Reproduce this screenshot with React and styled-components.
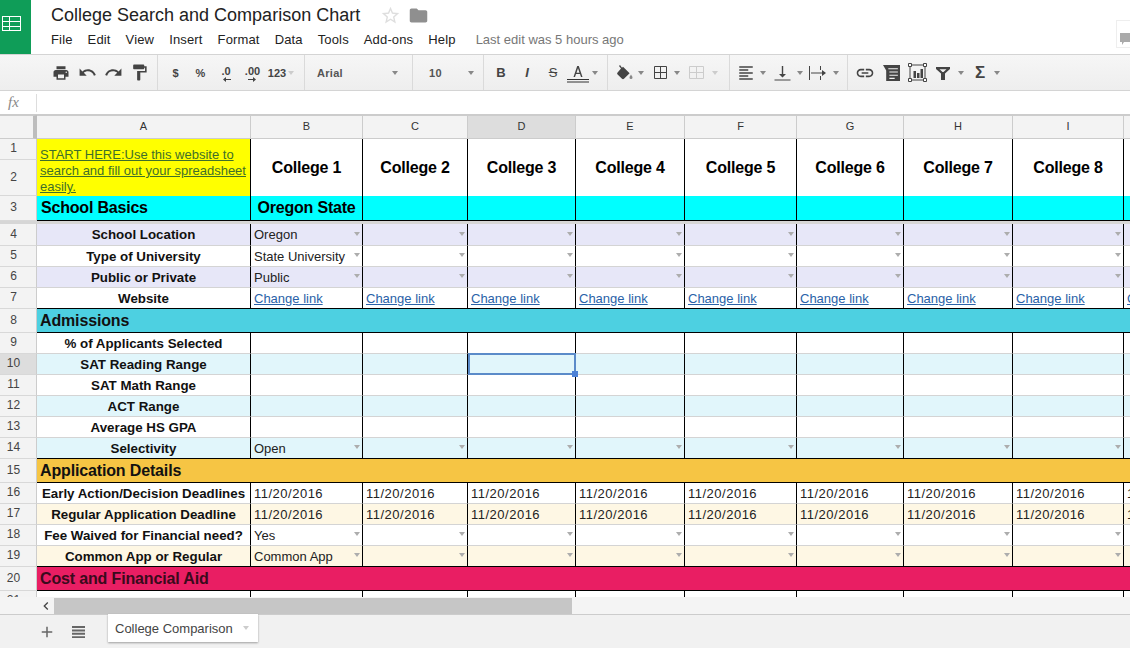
import React from 'react';
import styled, { createGlobalStyle } from 'styled-components';
import { MdPrint, MdUndo, MdRedo, MdFormatPaint, MdLink, MdFormatAlignLeft, MdAdd, MdChevronLeft, MdStarBorder, MdFolder } from 'react-icons/md';

const GlobalStyle = createGlobalStyle`
  html, body { margin: 0; padding: 0; background: #fff; }
  * { box-sizing: border-box; }
  body { font-family: "Liberation Sans", Arial, sans-serif; }
`;

const Page = styled.div`
  width: 1130px;
  height: 648px;
  display: flex;
  flex-direction: column;
  overflow: hidden;
  color: #000;
`;

const Header = styled.header`
  height: 55px;
  display: flex;
  flex: none;
  border-bottom: 1px solid #d4d4d4;
`;

const Logo = styled.div`
  width: 31px;
  padding: 16px 0 0 2px;
  background: #0f9d58;
  display: flex;
  align-items: flex-start;
`;

const HeadMain = styled.div`
  flex: 1;
  padding-left: 20px;
`;

const TitleRow = styled.div`
  height: 30px;
  display: flex;
  align-items: center;
`;

const Title = styled.div`
  font-size: 18px;
  color: #222;
  width: 329px;
`;

const MenuRow = styled.div`
  height: 18px;
  display: flex;
  align-items: center;
  gap: 15px;
  font-size: 13px;
  letter-spacing: 0.15px;
  color: #222;
`;

const LastEdit = styled.span`
  color: #777;
  margin-left: 5px;
  letter-spacing: 0;
`;

const CommentBox = styled.div`
  width: 14px;
  height: 28px;
  margin-top: 20px;
  border: 1px solid #eee;
  border-right: none;
  padding: 10px 0 0 3px;
`;

const Toolbar = styled.div`
  height: 36px;
  flex: none;
  display: flex;
  background: linear-gradient(#f6f6f6, #eeeeee);
  border-bottom: 1px solid #d4d4d4;
`;

const ToolGroup = styled.div`
  width: ${p => p.$w}px;
  padding-left: ${p => p.$pad || 0}px;
  display: flex;
  align-items: center;
  border-right: ${p => p.$last ? 'none' : '1px solid #dadada'};
`;

const Tool = styled.div`
  width: ${p => p.$w || 26}px;
  height: 24px;
  flex: none;
  display: flex;
  align-items: center;
  justify-content: center;
  color: #444;
  font-size: ${p => p.$size || 11}px;
  font-weight: ${p => p.$plain ? 400 : 700};
  font-style: ${p => p.$italic ? 'italic' : 'normal'};
`;

const DecimalTool = styled(Tool)`
  flex-direction: column;
  line-height: 11px;
  padding-top: 2px;
`;

const FontName = styled.div`
  flex: 1;
  font-size: 11px;
  font-weight: 700;
  letter-spacing: 0.3px;
  color: #555;
`;

const Caret = styled.span`
  flex: none;
  width: 0;
  height: 0;
  margin: 0 ${p => p.$gap || 0}px 0 ${p => p.$left || 0}px;
  border-left: 3px solid transparent;
  border-right: 3px solid transparent;
  border-top: 4px solid ${p => p.$light ? '#ccc' : '#888'};
`;

const FormulaBar = styled.div`
  height: 24px;
  flex: none;
  display: flex;
  align-items: center;
  border-bottom: 1px solid #ccc;
`;

const Fx = styled.div`
  width: 37px;
  height: 18px;
  padding-left: 8px;
  border-right: 1px solid #ddd;
  font-family: "Liberation Serif", serif;
  font-style: italic;
  font-size: 15px;
  line-height: 16px;
  color: #888;
`;

const Sheet = styled.div`
  height: 482px;
  flex: none;
  overflow: hidden;
`;

const Row = styled.div`
  display: grid;
  grid-template-columns: 37px 214px 112px 105px 108px 109px 112px 107px 109px 111px 120px;
  height: ${p => p.$h || 21}px;
`;

const RowNumber = styled.div`
  display: flex;
  align-items: center;
  justify-content: center;
  padding: 0 9px 2px 0;
  font-size: 12px;
  color: #444;
  background: ${p => p.$active ? '#dddddd' : '#f3f3f3'};
  border-right: 1px solid #ccc;
  border-bottom: 1px solid #d8d8d8;
`;

const ColHead = styled.div`
  display: flex;
  align-items: center;
  justify-content: center;
  padding-bottom: 3px;
  font-size: 11px;
  color: #333;
  background: ${p => p.$active ? '#dddddd' : '#f3f3f3'};
  border-right: 1px solid #ccc;
  border-top: 1px solid #ccc;
  border-bottom: 1px solid #ccc;
`;

const Corner = styled(ColHead)`
  border-right: 4px solid #bdbdbd;
  background: #f3f3f3;
`;

const RowStack = styled.div`
  display: grid;
  grid-template-rows: 21px 36px;
`;

const StartCell = styled.div`
  background: #ffff00;
  padding: 8px 0 0 3px;
  font-size: 13px;
  line-height: 16px;
  color: #3f6f2a;
  text-decoration: underline;
  border-right: 1px solid #000;
`;

const CollegeCell = styled.div`
  display: flex;
  align-items: center;
  justify-content: center;
  font-size: 16px;
  font-weight: 700;
  letter-spacing: -0.2px;
  border-right: 1px solid #000;
`;

const BandFill = styled.div`
  grid-column: 2 / -1;
  display: flex;
  align-items: center;
  padding-left: 3px;
  font-size: 16px;
  font-weight: 700;
  letter-spacing: -0.15px;
  color: ${p => p.$ink || '#111'};
  background: ${p => p.$bg};
  border-bottom: 1px solid #000;
`;

const BandCell = styled.div`
  display: flex;
  align-items: center;
  justify-content: ${p => p.$center ? 'center' : 'flex-start'};
  padding-left: ${p => p.$center ? 0 : 4}px;
  font-size: 16px;
  font-weight: 700;
  letter-spacing: -0.2px;
  background: #00ffff;
  border-right: 1px solid #000;
  border-bottom: 1px solid #000;
`;

const FrozenLine = styled.div`
  height: 3px;
  background: #d6d6d6;
`;

const Label = styled.div`
  display: flex;
  align-items: center;
  justify-content: center;
  font-size: 13.33px;
  font-weight: 700;
  white-space: nowrap;
  color: #111;
  background: ${p => p.$bg || '#fff'};
  border-bottom: 1px solid ${p => p.$edge ? '#000' : '#d4d4d4'};
  border-right: 1px solid #000;
`;

const Cell = styled.div`
  position: relative;
  display: flex;
  align-items: center;
  justify-content: space-between;
  padding: 0 3px;
  font-size: 13px;
  white-space: nowrap;
  overflow: ${p => p.$selected ? 'visible' : 'hidden'};
  color: #222;
  background: ${p => p.$bg || '#fff'};
  border-bottom: 1px solid ${p => p.$edge ? '#000' : '#d4d4d4'};
  border-right: 1px solid #000;
`;

const DateText = styled.span`
  letter-spacing: 0.5px;
`;

const Selection = styled.div`
  position: absolute;
  z-index: 1;
  inset: -1px -1px -1px 0;
  border: 2px solid #5b8bc9;
  &::after {
    content: '';
    position: absolute;
    right: -4px;
    bottom: -4px;
    width: 6px;
    height: 6px;
    background: #4d82d6;
  }
`;

const SheetLink = styled.a`
  color: #2a62a8;
  text-decoration: underline;
`;

const DropArrow = styled.span`
  flex: none;
  margin: 0 -1px 2px auto;
  width: 0;
  height: 0;
  border-left: 3.5px solid transparent;
  border-right: 3.5px solid transparent;
  border-top: 4px solid #adadad;
`;

const ScrollRow = styled.div`
  height: 17px;
  flex: none;
  display: flex;
  align-items: center;
  background: #f4f4f4;
`;

const ScrollArrow = styled.div`
  width: 54px;
  padding-left: 38px;
  display: flex;
  color: #444;
`;

const ScrollThumb = styled.div`
  width: 518px;
  height: 16px;
  background: #c6c6c6;
`;

const TabBar = styled.div`
  flex: 1;
  display: flex;
  align-items: flex-start;
  background: #f1f1f1;
  border-top: 1px solid #ccc;
`;

const TabTool = styled.div`
  width: ${p => p.$w}px;
  height: 34px;
  padding-left: ${p => p.$pad}px;
  display: flex;
  align-items: center;
  color: #666;
`;

const Tab = styled.div`
  width: 150px;
  height: 28px;
  margin-top: -1px;
  margin-left: 12px;
  padding: 0 7px;
  display: flex;
  align-items: center;
  justify-content: space-between;
  font-size: 13px;
  color: #444;
  background: #fff;
  box-shadow: 0 1px 2px rgba(0, 0, 0, 0.35);
`;

const COLUMNS = ['A', 'B', 'C', 'D', 'E', 'F', 'G', 'H', 'I', ''];
const COLLEGES = [1, 2, 3, 4, 5, 6, 7, 8];
const SLOTS = 9;

const LAVENDER = '#e7e7f8';
const SKY = '#e1f6fb';
const CREAM = '#fef7e4';

const Dark = ({ d, size = 16 }) => (
  <svg width={size} height={size} viewBox="0 0 16 16" fill="#444"><path d={d} /></svg>
);

const BasicsRows = [
  { n: 4, label: 'School Location', bg: LAVENDER, h: 22, kind: 'select', first: 'Oregon' },
  { n: 5, label: 'Type of University', kind: 'select', first: 'State University' },
  { n: 6, label: 'Public or Private', bg: LAVENDER, kind: 'select', first: 'Public' },
  { n: 7, label: 'Website', kind: 'link', edge: true },
];

const AdmissionRows = [
  { n: 9, label: '% of Applicants Selected' },
  { n: 10, label: 'SAT Reading Range', bg: SKY },
  { n: 11, label: 'SAT Math Range' },
  { n: 12, label: 'ACT Range', bg: SKY },
  { n: 13, label: 'Average HS GPA' },
  { n: 14, label: 'Selectivity', bg: SKY, kind: 'select', first: 'Open', edge: true },
];

const ApplicationRows = [
  { n: 16, label: 'Early Action/Decision Deadlines', kind: 'date' },
  { n: 17, label: 'Regular Application Deadline', bg: CREAM, kind: 'date' },
  { n: 18, label: 'Fee Waived for Financial need?', kind: 'select', first: 'Yes' },
  { n: 19, label: 'Common App or Regular', bg: CREAM, kind: 'select', first: 'Common App', edge: true },
];

const cellContent = (row, i) => {
  if (row.kind === 'date') return <DateText>11/20/2016</DateText>;
  if (row.kind === 'link') return <SheetLink>Change link</SheetLink>;
  if (row.kind === 'select') {
    return (
      <>
        {i === 0 ? row.first : ''}
        <DropArrow />
      </>
    );
  }
  return null;
};

const DataRow = ({ row }) => (
  <Row $h={row.h}>
    <RowNumber $active={row.n === 10}>{row.n}</RowNumber>
    <Label $bg={row.bg} $edge={row.edge}>{row.label}</Label>
    {Array.from({ length: SLOTS }, (_, i) => {
      const selected = row.n === 10 && i === 2;
      return (
        <Cell key={i} $bg={row.bg} $edge={row.edge} $selected={selected}>
          {cellContent(row, i)}
          {selected && <Selection />}
        </Cell>
      );
    })}
  </Row>
);

const BandRow = ({ n, h, bg, ink, children }) => (
  <Row $h={h}>
    <RowNumber>{n}</RowNumber>
    <BandFill $bg={bg} $ink={ink}>{children}</BandFill>
  </Row>
);

const SheetIcon = () => (
  <svg width="19" height="15" viewBox="0 0 19 15" fill="none" stroke="#fff" strokeWidth="1">
    <rect x="0.5" y="0.5" width="18" height="14" />
    <path d="M0.5 5.5H18.5M0.5 10.5H18.5M7.5 0.5V14.5" />
  </svg>
);

const ToolRow = () => (
  <Toolbar>
    <ToolGroup $w={158} $pad={48}>
      <Tool><MdPrint size={18} /></Tool>
      <Tool><MdUndo size={19} /></Tool>
      <Tool><MdRedo size={19} /></Tool>
      <Tool><MdFormatPaint size={19} /></Tool>
    </ToolGroup>
    <ToolGroup $w={147} $pad={5}>
      <Tool $w={25}>$</Tool>
      <Tool $w={25}>%</Tool>
      <DecimalTool $w={26}>
        .0
        <svg width="12" height="5" viewBox="0 0 12 5" fill="#444"><path d="M3 2.5L6 0V2H11V3H6V5Z" /></svg>
      </DecimalTool>
      <DecimalTool $w={27}>
        .00
        <svg width="12" height="5" viewBox="0 0 12 5" fill="#444"><path d="M9 2.5L6 0V2H1V3H6V5Z" /></svg>
      </DecimalTool>
      <Tool $w={22}>123</Tool>
      <Caret $light />
    </ToolGroup>
    <ToolGroup $w={108} $pad={12}>
      <FontName>Arial</FontName>
      <Caret $gap={14} />
    </ToolGroup>
    <ToolGroup $w={71} $pad={16}>
      <FontName>10</FontName>
      <Caret $gap={9} />
    </ToolGroup>
    <ToolGroup $w={124} $pad={4}>
      <Tool $size={13}>B</Tool>
      <Tool $size={13} $italic>I</Tool>
      <Tool $plain $size={13}><s>S</s></Tool>
      <Tool $w={24} $plain $size={14}>
        <svg width="22" height="22" viewBox="0 0 22 22">
          <path d="M6.5 15L10.2 4H11.8L15.5 15H14L13 12H9L8 15ZM9.5 10.7H12.5L11 6.2Z" fill="#444" />
          <path d="M0 17.5H22M0 20H22" stroke="#333" strokeWidth="1" />
        </svg>
      </Tool>
      <Caret $left={2} />
    </ToolGroup>
    <ToolGroup $w={122} $pad={6}>
      <Tool $w={22}>
        <svg width="18" height="18" viewBox="0 0 18 18" fill="#444">
          <path d="M4 1L3 2L5 4.5L1.6 8.4C1 9 1 9.8 1.6 10.4L6 14.8C6.6 15.4 7.4 15.4 8 14.8L13.6 9.2L7 2.8L6 3.8Z" />
          <path d="M15 10.5C14.2 11.8 13.5 12.6 13.5 13.6A1.5 1.5 0 0 0 16.5 13.6C16.5 12.6 15.8 11.8 15 10.5Z" fill="#888" />
        </svg>
      </Tool>
      <Caret $left={2} $gap={5} />
      <Tool $w={22}>
        <svg width="15" height="15" viewBox="0 0 15 15" fill="none" stroke="#444"><path d="M1.5 1.5H13.5V13.5H1.5ZM7.5 1.5V13.5M1.5 7.5H13.5" /></svg>
      </Tool>
      <Caret $left={3} $gap={5} />
      <Tool $w={22}>
        <svg width="17" height="15" viewBox="0 0 17 15" fill="none" stroke="#ccc"><path d="M1.5 1.5H15.5V13.5H1.5ZM8.5 1.5V13.5M1.5 7.5H15.5" /></svg>
      </Tool>
      <Caret $left={5} $light />
    </ToolGroup>
    <ToolGroup $w={118} $pad={6}>
      <Tool $w={20}><MdFormatAlignLeft size={18} /></Tool>
      <Caret $left={4} $gap={5} />
      <Tool $w={22}>
        <svg width="17" height="18" viewBox="0 0 17 18" fill="#444"><path d="M7.8 2H9.2V10H12L8.5 13.5L5 10H7.8ZM0.5 15.5H16.5V16.5H0.5Z" /></svg>
      </Tool>
      <Caret $left={4} $gap={5} />
      <Tool $w={20}>
        <svg width="20" height="18" viewBox="0 0 20 18" fill="#444"><path d="M1 2H2V16H1ZM12 2H13V6H12ZM12 12H13V16H12ZM3 8.5H14V6L18 9L14 12V9.5H3Z" /></svg>
      </Tool>
      <Caret $left={5} />
    </ToolGroup>
    <ToolGroup $w={200} $pad={4} $last>
      <Tool $w={26}><MdLink size={20} /></Tool>
      <Tool $w={27}>
        <Dark size={17} d="M0 1H16V16H3V6ZM5 4V5H14V4ZM6 7V8H14V7ZM6 10V11H14V10ZM6 13V14H11V13Z" />
      </Tool>
      <Tool $w={25}>
        <svg width="19" height="19" viewBox="0 0 19 19" fill="#444">
          <path d="M2 2H17V17H2Z" fill="none" stroke="#444" />
          <path d="M5.5 8H8V15H5.5ZM9 10H11.5V15H9ZM12.5 6H15V15H12.5Z" />
          <path d="M0.5 0.5H3.5V3.5H0.5ZM15.5 0.5H18.5V3.5H15.5ZM0.5 15.5H3.5V18.5H0.5ZM15.5 15.5H18.5V18.5H15.5Z" fill="#fff" stroke="#444" />
        </svg>
      </Tool>
      <Tool $w={25}>
        <Dark size={16} d="M1 2H15V4L10 8.5V15H6V8.5L1 4ZM4.5 4.2L7.5 7H8.5L11.5 4.2Z" />
      </Tool>
      <Caret $left={3} $gap={7} />
      <Tool $w={18} $size={17}>Σ</Tool>
      <Caret $left={5} />
    </ToolGroup>
  </Toolbar>
);

export default function App() {
  return (
    <Page>
      <GlobalStyle />
      <Header>
        <Logo><SheetIcon /></Logo>
        <HeadMain>
          <TitleRow>
            <Title>College Search and Comparison Chart</Title>
            <MdStarBorder size={21} color="#dedede" />
            <MdFolder size={21} color="#8f8f8f" style={{ marginLeft: 7 }} />
          </TitleRow>
          <MenuRow>
            <span>File</span>
            <span>Edit</span>
            <span>View</span>
            <span>Insert</span>
            <span>Format</span>
            <span>Data</span>
            <span>Tools</span>
            <span>Add-ons</span>
            <span>Help</span>
            <LastEdit>Last edit was 5 hours ago</LastEdit>
          </MenuRow>
        </HeadMain>
        <CommentBox>
          <svg width="11" height="12" viewBox="0 0 11 12" fill="#aaa"><path d="M0 0H11V9H4L2 12V9H0Z" /></svg>
        </CommentBox>
      </Header>
      <ToolRow />
      <FormulaBar><Fx>fx</Fx></FormulaBar>
      <Sheet>
        <Row $h={24}>
          <Corner />
          {COLUMNS.map((c, i) => <ColHead key={i} $active={c === 'D'}>{c}</ColHead>)}
        </Row>
        <Row $h={57}>
          <RowStack>
            <RowNumber>1</RowNumber>
            <RowNumber>2</RowNumber>
          </RowStack>
          <StartCell>START HERE:Use this website to search and fill out your spreadsheet easily.</StartCell>
          {COLLEGES.map(n => <CollegeCell key={n}>College {n}</CollegeCell>)}
          <CollegeCell />
        </Row>
        <Row $h={25}>
          <RowNumber>3</RowNumber>
          <BandCell>School Basics</BandCell>
          <BandCell $center>Oregon State</BandCell>
          {Array.from({ length: SLOTS - 1 }, (_, i) => <BandCell key={i} />)}
        </Row>
        <FrozenLine />
        {BasicsRows.map(r => <DataRow key={r.n} row={r} />)}
        <BandRow n={8} h={24} bg="#4dd0e1">Admissions</BandRow>
        {AdmissionRows.map(r => <DataRow key={r.n} row={r} />)}
        <BandRow n={15} h={24} bg="#f6c544">Application Details</BandRow>
        {ApplicationRows.map(r => <DataRow key={r.n} row={r} />)}
        <BandRow n={20} h={24} bg="#e91e63" ink="#3a0a1c">Cost and Financial Aid</BandRow>
        <DataRow row={{ n: 21, label: 'Tuition and Fees' }} />
      </Sheet>
      <ScrollRow>
        <ScrollArrow><MdChevronLeft size={16} /></ScrollArrow>
        <ScrollThumb />
      </ScrollRow>
      <TabBar>
        <TabTool $w={61} $pad={38}><MdAdd size={18} /></TabTool>
        <TabTool $w={35} $pad={11}>
          <svg width="13" height="12" viewBox="0 0 13 12" fill="#666"><path d="M0 0H13V2H0ZM0 3.4H13V5.4H0ZM0 6.8H13V8.8H0ZM0 10.2H13V12H0Z" /></svg>
        </TabTool>
        <Tab>College Comparison<Caret $light $gap={2} /></Tab>
      </TabBar>
    </Page>
  );
}
